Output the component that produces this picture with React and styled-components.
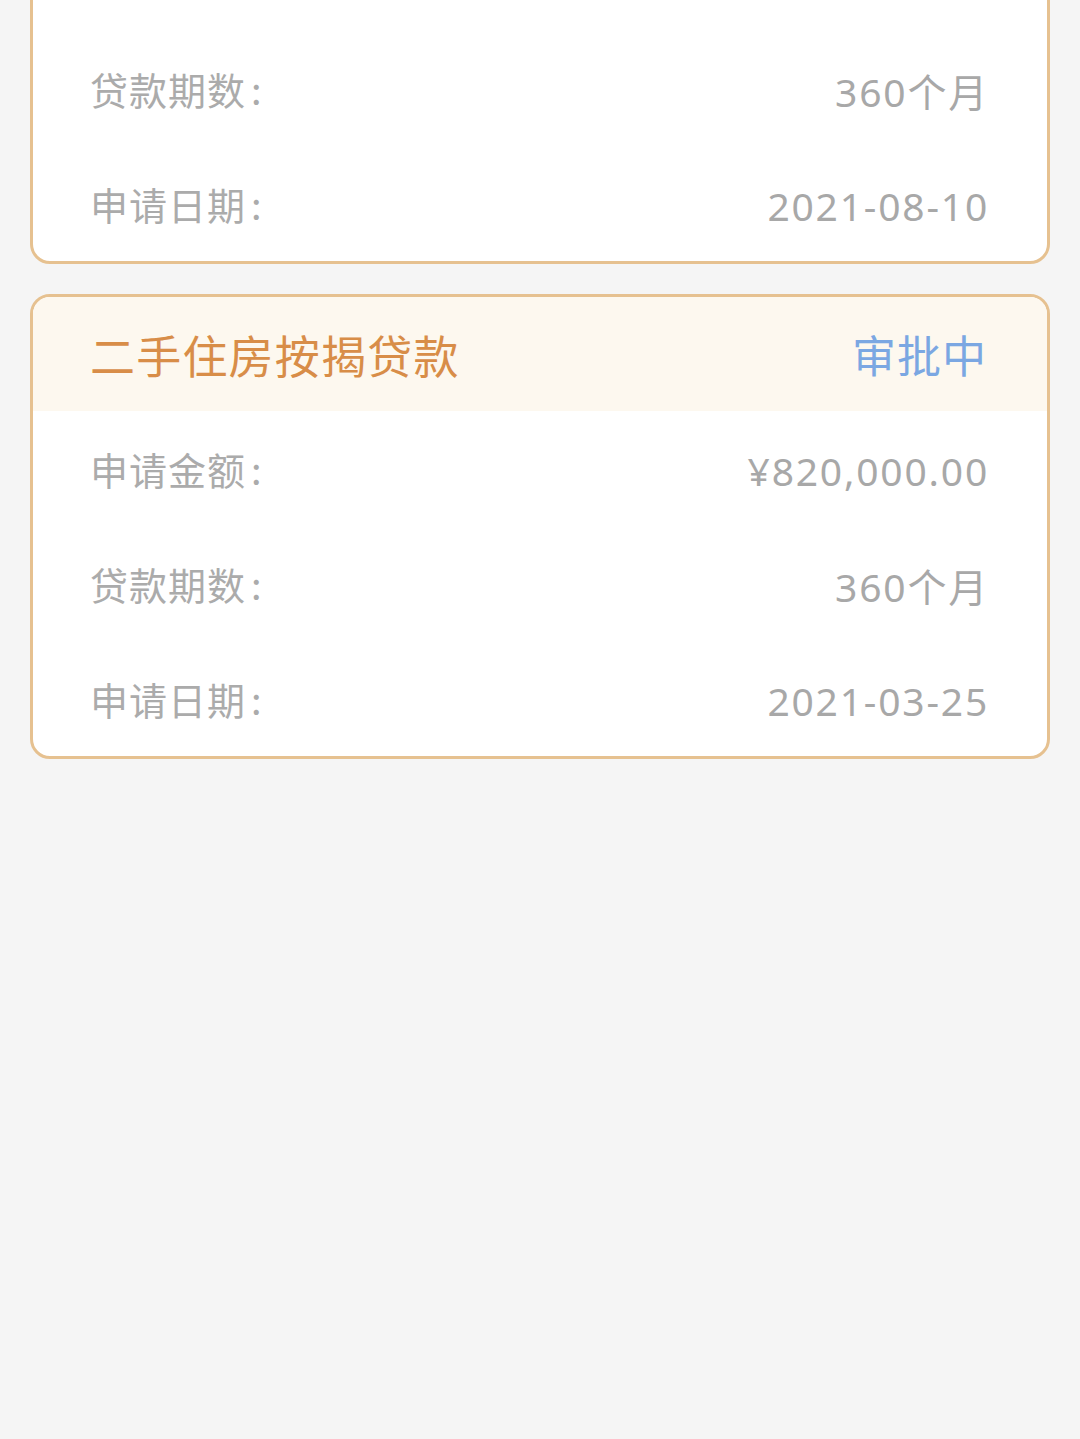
import React from "react";
import styled, { createGlobalStyle } from "styled-components";

const Global = createGlobalStyle`
  html, body { margin: 0; padding: 0; background: #f5f5f5; }
  body { font-family: "Noto Sans", "Noto Sans CJK SC", sans-serif; overflow: hidden; }
`;

const Page = styled.div`
  min-height: 1439px;
  background: #f5f5f5;
  padding: 0 30px;
  display: flex;
  flex-direction: column;
  gap: 30px;
`;

const Card = styled.div`
  background: #ffffff;
  border: 3px solid #e6c190;
  border-radius: 20px;
  overflow: hidden;
  margin-top: ${(p) => p.$offset || 0}px;
  display: flex;
  flex-direction: column;
`;

const Header = styled.div`
  height: 114px;
  background: #fdf8ef;
  display: flex;
  align-items: center;
  justify-content: space-between;
  padding: 0 60px 0 57px;
`;

const Title = styled.div`
  font-family: "Noto Sans CJK SC", sans-serif;
  font-size: 45px;
  color: #d88d48;
  letter-spacing: 1.2px;
`;

const Status = styled.div`
  font-family: "Noto Sans CJK SC", sans-serif;
  font-size: 44px;
  color: #7ba7e2;
  letter-spacing: 1px;
`;

const Row = styled.div`
  height: 115px;
  display: flex;
  align-items: center;
  justify-content: space-between;
  padding: 0 58px 0 57px;
`;

const Label = styled.div`
  font-family: "Noto Sans CJK SC", sans-serif;
  font-size: 38px;
  letter-spacing: 1px;
  color: #ababab;
`;

const Colon = styled.span`
  margin-left: 5px;
`;

const Value = styled.div`
  font-family: "Noto Sans", "Noto Sans CJK SC", sans-serif;
  font-size: 39px;
  letter-spacing: 1.8px;
  color: #a8a8a8;
  margin-top: 3px;
`;

const Currency = styled.span`
  margin-right: 0;
`;

const loans = [
  { title: "二手住房按揭贷款", status: "审批中", amount: "820,000.00", term: "360个月", date: "2021-08-10" },
  { title: "二手住房按揭贷款", status: "审批中", amount: "820,000.00", term: "360个月", date: "2021-03-25" },
];

export default function App() {
  return (
    <>
      <Global />
      <Page>
        {loans.map((l, i) => (
          <Card key={i} $offset={i === 0 ? -201 : 0}>
            <Header>
              <Title>{l.title}</Title>
              <Status>{l.status}</Status>
            </Header>
            <Row>
              <Label>申请金额<Colon>:</Colon></Label>
              <Value><Currency>¥</Currency>{l.amount}</Value>
            </Row>
            <Row>
              <Label>贷款期数<Colon>:</Colon></Label>
              <Value>{l.term}</Value>
            </Row>
            <Row>
              <Label>申请日期<Colon>:</Colon></Label>
              <Value>{l.date}</Value>
            </Row>
          </Card>
        ))}
      </Page>
    </>
  );
}
